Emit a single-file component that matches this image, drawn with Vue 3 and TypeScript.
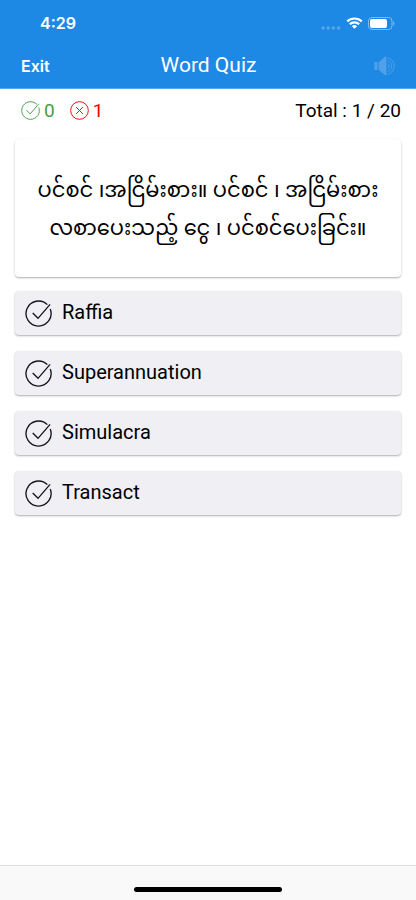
<script setup lang="ts">
import { ref } from 'vue'

const correct = ref(0)
const wrong = ref(1)
const current = ref(1)
const total = 20

const question = 'ပင်စင် ၊အငြိမ်းစား။ ပင်စင် ၊ အငြိမ်းစား\nလစာပေးသည့် ငွေ ၊ ပင်စင်ပေးခြင်း။'
const options: string[] = ['Raffia', 'Superannuation', 'Simulacra', 'Transact']
</script>

<template>
  <div class="screen">
    <header class="header">
      <div class="status">
        <span class="time">4:29</span>
        <div class="indicators">
          <svg class="signal" viewBox="0 0 20 4" aria-hidden="true">
            <circle cx="2" cy="2" r="1.8" />
            <circle cx="7.2" cy="2" r="1.8" />
            <circle cx="12.4" cy="2" r="1.8" />
            <circle cx="17.6" cy="2" r="1.8" />
          </svg>
          <svg class="wifi" viewBox="0 0 17 12" aria-hidden="true">
            <path d="M1.2 4.4a10.6 10.6 0 0 1 14.6 0" />
            <path d="M3.8 7.2a6.8 6.8 0 0 1 9.4 0" />
            <path class="dot" d="M8.5 11.8 5.9 9.2a3.7 3.7 0 0 1 5.2 0Z" />
          </svg>
          <svg class="battery" viewBox="0 0 27 13" aria-hidden="true">
            <rect class="shell" x="0.5" y="0.5" width="23.5" height="12" rx="3.5" />
            <rect class="charge" x="2" y="2" width="17" height="9" rx="2" />
            <path class="cap" d="M25.2 4.2c1.6.6 1.6 4 0 4.6Z" />
          </svg>
        </div>
      </div>
      <nav class="navbar">
        <button type="button" class="exit">Exit</button>
        <h1 class="title">Word Quiz</h1>
        <button type="button" class="sound" aria-label="Play sound" disabled>
          <svg viewBox="0 0 22 20" aria-hidden="true">
            <rect class="fill" x="0.5" y="6" width="3" height="8" rx="0.6" />
            <path class="fill" d="M4.6 6.2 11 .8c.6-.5 1.4-.2 1.4.6v17.2c0 .8-.8 1.1-1.4.6L4.6 13.8Z" />
            <path d="M13.5 7.6a2.6 2.6 0 0 1 0 4.8M13.5 4.7a5.5 5.5 0 0 1 0 10.6M13.5 1.7a8.5 8.5 0 0 1 0 16.6" />
          </svg>
        </button>
      </nav>
    </header>

    <main class="content">
      <section class="score">
        <div class="tally right">
          <svg viewBox="0 0 28 28" aria-hidden="true">
            <path d="M23.2 4.8A13 13 0 1 0 26.2 9.4" />
            <path d="m8 13.5 5.5 5.5L26 4.5" />
          </svg>
          <span>{{ correct }}</span>
        </div>
        <div class="tally wrong">
          <svg viewBox="0 0 28 28" aria-hidden="true">
            <circle cx="14" cy="14" r="13" />
            <path d="m9 9 10 10M19 9 9 19" />
          </svg>
          <span>{{ wrong }}</span>
        </div>
        <span class="total">Total : {{ current }} / {{ total }}</span>
      </section>

      <section class="question" lang="my">
        <p>{{ question }}</p>
      </section>

      <ul class="options">
        <li v-for="option in options" :key="option">
          <button type="button" class="option">
            <svg viewBox="0 0 28 28" aria-hidden="true">
              <path d="M23.2 4.8A13 13 0 1 0 26.2 9.4" />
              <path d="m8 13.5 5.5 5.5L26 4.5" />
            </svg>
            <span>{{ option }}</span>
          </button>
        </li>
      </ul>
    </main>

    <footer class="footer">
      <div class="home-bar"></div>
    </footer>
  </div>
</template>

<style>
body {
  margin: 0;
  background: #fff;
}
</style>

<style scoped>
.screen {
  display: flex;
  flex-direction: column;
  min-height: 100vh;
  color: #000;
  font-family: 'Roboto', sans-serif;
}

button {
  margin: 0;
  padding: 0;
  border: 0;
  background: none;
  color: inherit;
  font: inherit;
  cursor: pointer;
}

svg {
  display: block;
  flex: none;
  fill: none;
}

.header {
  box-sizing: border-box;
  height: 89px;
  border-bottom: 1px solid #5aa7ec;
  background: #1e88e5;
  color: #fff;
}

.status {
  display: flex;
  align-items: center;
  justify-content: space-between;
  height: 46px;
  padding: 0 21px 0 40px;
}

.time {
  font: 600 16px/20px 'Inter', sans-serif;
}

.indicators {
  display: flex;
  align-items: center;
  gap: 5px;
}

.signal {
  align-self: flex-end;
  width: 20px;
  height: 4px;
  fill: #55a5ea;
}

.wifi {
  width: 17px;
  height: 12px;
  stroke: #fff;
  stroke-width: 2.2;
}

.wifi .dot {
  fill: #fff;
  stroke: none;
}

.battery {
  width: 27px;
  height: 13px;
}

.shell {
  stroke: #7dbaf0;
}

.charge {
  fill: #fff;
}

.cap {
  fill: #7dbaf0;
}

.navbar {
  display: grid;
  grid-template-columns: 1fr auto 1fr;
  align-items: center;
  height: 40px;
  padding: 0 20px 0 21px;
}

.exit {
  justify-self: start;
  font: 600 16px/20px 'Inter', sans-serif;
}

.title {
  margin: 0;
  padding-bottom: 3px;
  font-size: 21px;
  line-height: 24px;
  font-weight: 400;
}

.sound {
  justify-self: end;
}

.sound svg {
  width: 22px;
  height: 20px;
  stroke: #4fa1ea;
}

.sound .fill {
  fill: #4fa1ea;
  stroke: none;
}

.content {
  flex: 1;
  padding: 0 15px;
}

.score {
  display: flex;
  align-items: center;
  gap: 15px;
  height: 43px;
  margin-bottom: 7px;
  padding-left: 6px;
  font-size: 19px;
}

.tally {
  display: flex;
  align-items: center;
  gap: 4px;
}

.tally svg {
  width: 19px;
  height: 19px;
  stroke: currentColor;
  stroke-width: 1.4;
}

.right {
  color: #43a047;
}

.wrong {
  color: #f00;
}

.total {
  margin-left: auto;
}

.question {
  box-sizing: border-box;
  min-height: 138px;
  padding: 34px 16px 20px;
  border-radius: 4px;
  background: #fff;
  box-shadow: 0 1px 2px rgb(0 0 0 / 32%);
  font-family: 'Noto Sans Myanmar', 'Padauk', 'Noto Sans', sans-serif;
  font-size: 21px;
  text-align: center;
}

.question p {
  margin: 0;
  line-height: 38px;
  white-space: pre-line;
}

.options {
  display: grid;
  gap: 16px;
  margin: 14px 0 0;
  padding: 0;
  list-style: none;
}

.option {
  display: flex;
  align-items: center;
  gap: 10px;
  width: 100%;
  height: 44px;
  padding: 0 10px;
  border-radius: 4px;
  background: #efeff4;
  box-shadow: 0 1px 2px rgb(0 0 0 / 32%);
  font-size: 20px;
  text-align: left;
}

.option svg {
  width: 27px;
  height: 27px;
  stroke: #15151c;
  stroke-width: 1.4;
}

.option span {
  padding-bottom: 3px;
}

.footer {
  display: flex;
  justify-content: center;
  box-sizing: border-box;
  height: 35px;
  padding-top: 21px;
  border-top: 1px solid #dedede;
  background: #f9f9f9;
}

.home-bar {
  width: 148px;
  height: 5px;
  border-radius: 3px;
  background: #000;
}
</style>
